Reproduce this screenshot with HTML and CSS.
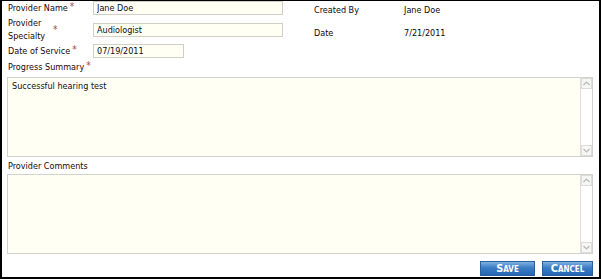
FILE: index.html
```html
<!DOCTYPE html>
<html>

<head>
    <title>Progress Note</title>
    <link rel="stylesheet" href="styles.css">
</head>

<body>
    <div class="panel">
        <div class="top">
            <div class="fields">
                <label class="lbl">Provider Name<span class="req">*</span></label>
                <input class="txt" type="text" value="Jane Doe">
                <label class="lbl"><span class="wrap">Provider Specialty</span><span class="req mid">*</span></label>
                <input class="txt" type="text" value="Audiologist">
                <label class="lbl">Date of Service<span class="req">*</span></label>
                <input class="txt short" type="text" value="07/19/2011">
            </div>
            <dl class="meta">
                <dt>Created By</dt>
                <dd>Jane Doe</dd>
                <dt>Date</dt>
                <dd>7/21/2011</dd>
            </dl>
        </div>

        <div class="lbl section">Progress Summary<span class="req">*</span></div>
        <div class="area">
            <textarea>Successful hearing test</textarea>
            <div class="scroll">
                <span class="arrow"><svg width="7" height="5" viewBox="0 0 7 5"><path d="M0.5 4 L3.5 1 L6.5 4" fill="none" stroke="#b8b8b8" stroke-width="1.2"/></svg></span>
                <span class="arrow"><svg width="7" height="5" viewBox="0 0 7 5"><path d="M0.5 1 L3.5 4 L6.5 1" fill="none" stroke="#b8b8b8" stroke-width="1.2"/></svg></span>
            </div>
        </div>

        <div class="lbl section second">Provider Comments</div>
        <div class="area">
            <textarea></textarea>
            <div class="scroll">
                <span class="arrow"><svg width="7" height="5" viewBox="0 0 7 5"><path d="M0.5 4 L3.5 1 L6.5 4" fill="none" stroke="#b8b8b8" stroke-width="1.2"/></svg></span>
                <span class="arrow"><svg width="7" height="5" viewBox="0 0 7 5"><path d="M0.5 1 L3.5 4 L6.5 1" fill="none" stroke="#b8b8b8" stroke-width="1.2"/></svg></span>
            </div>
        </div>

        <div class="actions">
            <button class="btn save">Save</button>
            <button class="btn cancel">Cancel</button>
        </div>
    </div>
</body>

</html>
```

FILE: styles.css
```css
body {
    margin: 0;
    background: #fff;
    font-family: "DejaVu Sans Condensed", "DejaVu Sans", sans-serif;
    font-stretch: condensed;
    font-size: 9px;
    color: #0a0a0a;
}

.panel {
    width: 601px;
    height: 279px;
    box-sizing: border-box;
    border: solid #000;
    border-width: 1px 2px 2px 2px;
    padding: 0 6px 0 5px;
    display: flex;
    flex-direction: column;
}

.top {
    display: flex;
    align-items: flex-start;
}

.fields {
    display: grid;
    grid-template-columns: 86px 190px;
    grid-template-rows: 14px 27px 14px;
    row-gap: 1px;
    align-items: center;
}

.lbl {
    color: #1e0606;
    padding-left: 1px;
    line-height: 12px;
}

.lbl .wrap {
    display: inline-block;
    width: 40px;
    line-height: 13px;
}

label.lbl {
    display: flex;
    align-items: center;
}

.req {
    color: #a8473c;
    font-size: 10px;
    align-self: flex-start;
    margin-left: 2px;
    line-height: 9px;
}

.req.mid {
    align-self: center;
    margin-left: 5px;
}

.section .req {
    vertical-align: top;
}

.txt {
    height: 14px;
    box-sizing: border-box;
    border: 1px solid #cfcfc8;
    background: #fffff3;
    padding: 0 3px;
    font: inherit;
    color: #0c0c16;
    outline: none;
}

.short {
    width: 91px;
}

.meta {
    display: grid;
    grid-template-columns: 90px auto;
    align-content: start;
    row-gap: 11px;
    margin: 3px 0 0 31px;
    line-height: 12px;
}

.meta dt,
.meta dd {
    margin: 0;
}

.section {
    margin-top: 3px;
    margin-bottom: 4px;
}

.section.second {
    margin-top: 3px;
    margin-bottom: 2px;
}

.area {
    display: flex;
    height: 80px;
    box-sizing: border-box;
    border: 1px solid #d2d2cc;
    background: #fffff4;
}

.area textarea {
    flex: 1;
    border: none;
    background: transparent;
    resize: none;
    outline: none;
    padding: 3px 4px;
    font: inherit;
    color: #140c16;
}

.scroll {
    width: 11px;
    border-left: 1px solid #dedede;
    background: #fff;
    display: flex;
    flex-direction: column;
    justify-content: space-between;
}

.arrow {
    height: 11px;
    box-sizing: border-box;
    border: 1px solid #dcdcdc;
    background: #f6f6f4;
    display: flex;
    justify-content: center;
    align-items: center;
}

.actions {
    display: flex;
    justify-content: flex-end;
    gap: 7px;
    margin-top: auto;
    margin-bottom: 1px;
}

.btn {
    height: 15px;
    padding: 0;
    border: 1px solid #2a5f9e;
    background: linear-gradient(#7fb0e0, #3b7cc4 45%, #2366b2);
    color: #fff;
    font-family: "DejaVu Sans Condensed", "DejaVu Sans", sans-serif;
    font-weight: bold;
    font-size: 11px;
    font-variant: small-caps;
    line-height: 12px;
    cursor: pointer;
}

.save {
    width: 55px;
}

.cancel {
    width: 51px;
}
```
